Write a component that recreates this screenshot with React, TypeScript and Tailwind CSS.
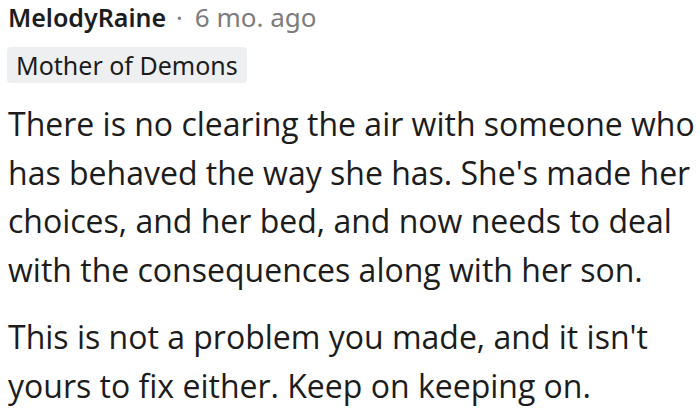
export default function App() {
  return (
    <div className="w-[700px] h-[418px] bg-white overflow-hidden pl-[8px] pt-[2px]">
      <div className="flex items-baseline text-[25px] leading-[30px] font-['Noto_Sans',sans-serif]">
        <span className="font-semibold text-[#1c1c1c]">MelodyRaine</span>
        <span className="text-[#7c7c7c] ml-[10px]">·</span>
        <span className="text-[#7c7c7c] text-[26px] ml-[12px]">6 mo. ago</span>
      </div>
      <div className="ml-[-1px] mt-[15px] inline-block bg-[#edeff1] rounded-[4px] px-[9px] h-[36px] leading-[36px] text-[25px] text-[#1c1c1c] font-['Noto_Sans',sans-serif]">
        Mother of Demons
      </div>
      <div className="mt-[17px] w-[698px] text-[32px] leading-[48.5px] text-[#1c1c1c] font-['Open_Sans',sans-serif]">
        <p>There is no clearing the air with someone who has behaved the way she has. She's made her choices, and her bed, and now needs to deal with the consequences along with her son.</p>
        <p className="mt-[19px]">This is not a problem you made, and it isn't yours to fix either. Keep on keeping on.</p>
      </div>
    </div>
  );
}
